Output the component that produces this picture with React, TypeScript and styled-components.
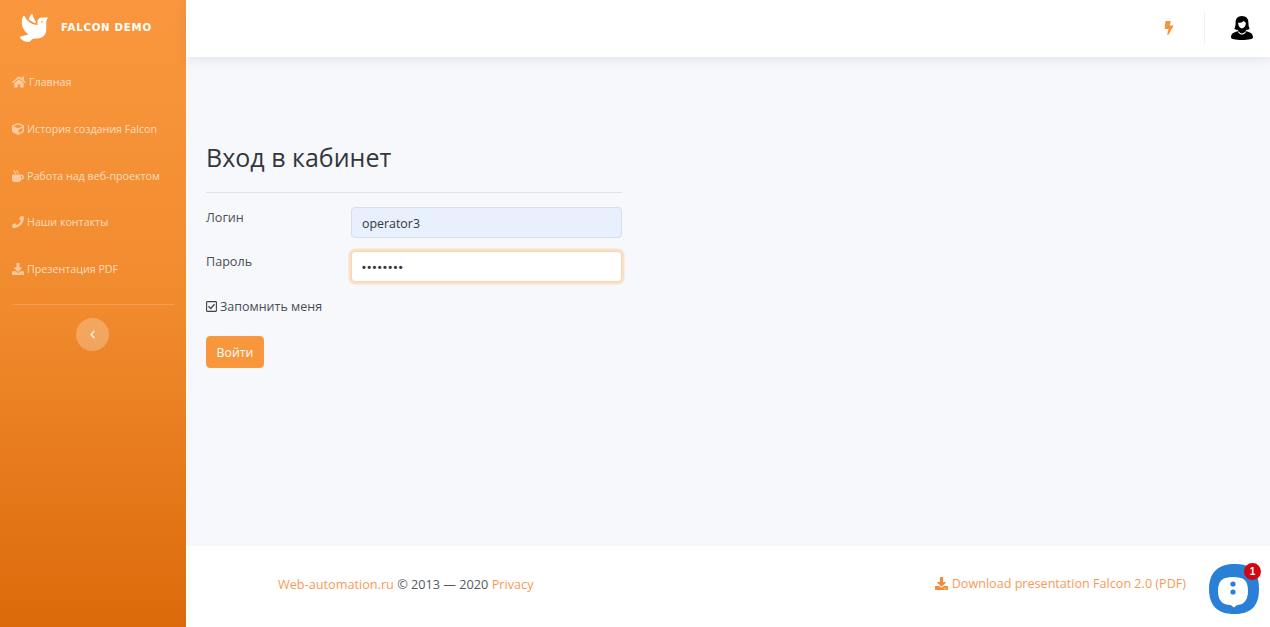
import styled, { createGlobalStyle } from 'styled-components';
import { FaBolt, FaChevronLeft, FaCube, FaDove, FaDownload, FaHome, FaMugHot, FaPhone } from 'react-icons/fa';
import type { ReactNode } from 'react';

const GlobalStyle = createGlobalStyle`
  html, body, #root {
    margin: 0;
    height: 100%;
  }
  body {
    font-family: "Open Sans", "Noto Sans", sans-serif;
    color: #3e4349;
    overflow: hidden;
  }
`;

const Page = styled.div`
  display: flex;
  height: 627px;
  width: 1270px;
`;

const Sidebar = styled.aside`
  width: 186px;
  flex-shrink: 0;
  display: flex;
  flex-direction: column;
  background: linear-gradient(180deg, #fa973e 0%, #f08a2d 50%, #dc6a0a 100%);
  padding: 0 12px;
  box-sizing: border-box;
`;

const Brand = styled.div`
  height: 55px;
  display: flex;
  align-items: center;
  gap: 13px;
  padding-left: 8px;
  color: #fff;
  font-family: "DejaVu Sans", sans-serif;
  font-weight: 700;
  font-size: 10.2px;
  letter-spacing: 0.75px;
  svg {
    font-size: 28px;
  }
`;

const NavList = styled.nav`
  display: flex;
  flex-direction: column;
  padding-top: 4px;
`;

const NavItem = styled.a`
  height: 46.7px;
  display: flex;
  align-items: center;
  gap: 3px;
  color: rgba(255, 255, 255, 0.7);
  font-size: 10.7px;
  white-space: nowrap;
  svg {
    flex-shrink: 0;
    opacity: 0.75;
  }
`;

const NavDivider = styled.hr`
  border: 0;
  border-top: 1px solid rgba(255, 255, 255, 0.16);
  margin: 12px 0 13px;
`;

const Collapse = styled.button`
  width: 33px;
  height: 33px;
  border: 0;
  padding: 0;
  margin-left: -1px;
  border-radius: 50%;
  align-self: center;
  display: flex;
  align-items: center;
  justify-content: center;
  background: rgba(255, 255, 255, 0.25);
  color: rgba(255, 255, 255, 0.85);
  font-size: 9px;
`;

const Main = styled.div`
  flex: 1;
  min-width: 0;
  display: flex;
  flex-direction: column;
  background: #f6f8fc;
`;

const TopBar = styled.header`
  height: 57px;
  box-sizing: border-box;
  flex-shrink: 0;
  display: flex;
  align-items: center;
  justify-content: flex-end;
  background: #fff;
  box-shadow: 0 2px 12px rgba(90, 100, 120, 0.14);
  padding: 0 17px 1px 0;
`;

const Bolt = styled.span`
  color: #f7923a;
  font-size: 14px;
  display: flex;
  margin-right: 28px;
`;

const TopDivider = styled.span`
  width: 1px;
  height: 32px;
  background: #eef0f4;
  margin-right: 26px;
`;

const Avatar = styled.svg`
  width: 22px;
  height: 24px;
  display: block;
`;

const Content = styled.main`
  flex: 1;
  padding: 84px 0 0 20px;
`;

const LoginForm = styled.form`
  width: 416px;
`;

const Title = styled.h1`
  margin: 0;
  font-size: 25px;
  line-height: 32px;
  font-weight: 400;
  color: #33373c;
`;

const Rule = styled.hr`
  border: 0;
  border-top: 1px solid #dfe2e7;
  margin: 19px 0 14px;
`;

const Row = styled.div`
  display: flex;
  margin-bottom: 13px;
`;

const FieldLabel = styled.label`
  width: 145px;
  padding-top: 1px;
  font-size: 12.6px;
  line-height: 20px;
  color: #4a4e54;
`;

const Input = styled.div<{ $focused?: boolean }>`
  flex: 1;
  height: 31px;
  box-sizing: border-box;
  display: flex;
  align-items: center;
  padding: 1px 0 0 10px;
  border-radius: 4px;
  font-size: 12.4px;
  color: #33373c;
  background: ${p => (p.$focused ? '#fff' : '#e8f0fe')};
  border: 1px solid ${p => (p.$focused ? '#fbd3ae' : '#d6deea')};
  box-shadow: ${p => (p.$focused ? '0 0 0 2.5px #fbe0c9' : 'none')};
`;

const Dots = styled.span`
  font-size: 11px;
  letter-spacing: 1.4px;
  font-family: "Liberation Sans", sans-serif;
  font-weight: 700;
`;

const Remember = styled.div`
  display: flex;
  align-items: center;
  gap: 3px;
  margin-top: 15px;
  font-size: 12.5px;
  line-height: 20px;
  color: #4a4e54;
`;

const CheckIcon = styled.svg`
  width: 11px;
  height: 11px;
  margin-top: -1px;
`;

const SubmitButton = styled.button`
  display: block;
  margin-top: 19px;
  width: 58px;
  height: 32px;
  padding: 0;
  border: 1px solid #f79a48;
  border-radius: 4px;
  background: #f8963c;
  color: #fff;
  font-family: inherit;
  font-size: 12.3px;
`;

const Footer = styled.footer`
  height: 81px;
  box-sizing: border-box;
  flex-shrink: 0;
  display: flex;
  align-items: center;
  justify-content: space-between;
  background: #fff;
  padding: 0 84px 6px 92px;
  font-size: 12.7px;
  position: relative;
`;

const Copy = styled.span`
  color: #565a60;
`;

const FootLink = styled.a`
  color: #f79a57;
`;

const DownloadLink = styled(FootLink)`
  font-size: 12.6px;
  svg {
    color: #f58a3a;
    font-size: 13px;
    vertical-align: -2px;
    margin-right: 4px;
  }
`;

const ChatBubble = styled.div`
  position: absolute;
  right: 11px;
  bottom: 13px;
  width: 50px;
  height: 50px;
`;

const ChatBadge = styled.span`
  position: absolute;
  top: -1px;
  right: -2px;
  width: 17px;
  height: 17px;
  border-radius: 50%;
  background: #d40511;
  color: #fff;
  font-family: "Liberation Sans", sans-serif;
  font-size: 10px;
  font-weight: 700;
  display: flex;
  align-items: center;
  justify-content: center;
`;

const navItems: { label: string; icon: ReactNode }[] = [
  { label: 'Главная', icon: <FaHome size={14} /> },
  { label: 'История создания Falcon', icon: <FaCube size={12} /> },
  { label: 'Работа над веб-проектом', icon: <FaMugHot size={12} /> },
  { label: 'Наши контакты', icon: <FaPhone size={12} /> },
  { label: 'Презентация PDF', icon: <FaDownload size={12} /> },
];

export default function App() {
  return (
    <>
      <GlobalStyle />
      <Page>
        <Sidebar>
          <Brand>
            <FaDove />
            FALCON DEMO
          </Brand>
          <NavList>
            {navItems.map(item => (
              <NavItem key={item.label}>
                {item.icon}
                {item.label}
              </NavItem>
            ))}
          </NavList>
          <NavDivider />
          <Collapse type="button">
            <FaChevronLeft />
          </Collapse>
        </Sidebar>
        <Main>
          <TopBar>
            <Bolt>
              <FaBolt />
            </Bolt>
            <TopDivider />
            <Avatar viewBox="0 0 24 26">
              <path
                fill="#000"
                d="M12 0C7.500 0 5 3 5 7c0 3-.4 5.200-1.400 7 1.300.8 2.800 1.100 4.200 1.200l-.2 1.300C3.800 17.400 0 18.800 0 23c0 2 5 3 12 3s12-1 12-3c0-4.200-3.800-5.600-7.600-6.500l-.2-1.300c1.400-.1 2.900-.4 4.200-1.200-1-1.800-1.400-4-1.400-7 0-4-2.500-7-7-7z"
              />
              <path fill="#fff" d="M7.800 7.400c2.400 0 4.800-.8 6.200-2.400.6 1.100 1.300 2 2.200 2.400 0 3.200-1.700 6-4.200 6s-4.200-2.800-4.200-6z" />
              <path fill="#fff" d="M8.500 16.800c1 1.300 2.200 2.100 3.500 2.100s2.500-.8 3.500-2.100l1 .3c-1 1.800-2.700 3.100-4.500 3.100s-3.500-1.300-4.500-3.100z" />
            </Avatar>
          </TopBar>
          <Content>
            <LoginForm>
              <Title>Вход в кабинет</Title>
              <Rule />
              <Row>
                <FieldLabel>Логин</FieldLabel>
                <Input>operator3</Input>
              </Row>
              <Row>
                <FieldLabel>Пароль</FieldLabel>
                <Input $focused>
                  <Dots>••••••••</Dots>
                </Input>
              </Row>
              <Remember>
                <CheckIcon viewBox="0 0 11 11">
                  <rect x="0.6" y="0.6" width="9.800" height="9.800" rx="0.6" fill="none" stroke="#3e4349" strokeWidth="1.100" />
                  <path d="M2.500 5.300l2.200 2.200 3.800-4.200" fill="none" stroke="#3e4349" strokeWidth="1.300" />
                </CheckIcon>
                Запомнить меня
              </Remember>
              <SubmitButton type="button">Войти</SubmitButton>
            </LoginForm>
          </Content>
          <Footer>
            <Copy>
              <FootLink>Web-automation.ru</FootLink> © 2013 — 2020 <FootLink>Privacy</FootLink>
            </Copy>
            <DownloadLink>
              <FaDownload />
              Download presentation Falcon 2.0 (PDF)
            </DownloadLink>
            <ChatBubble>
              <svg viewBox="0 0 50 50" width="50" height="50">
                <path
                  fill="#2a7fd6"
                  d="M25 0C40 0 50 5 50 25c0 18-9 25-25 25C9 50 0 42 0 25 0 6 12 0 25 0z"
                />
                <path
                  fill="#fff"
                  d="M24 13c11 0 15 3 15 14 0 10-5 14-11 14l-3 2.500-3.500-2.500C14 41 9 37 9 27c0-11 5-14 15-14z"
                />
                <circle cx="24" cy="20" r="2.600" fill="#2a7fd6" />
                <circle cx="24" cy="28" r="2.600" fill="#2a7fd6" />
              </svg>
              <ChatBadge>1</ChatBadge>
            </ChatBubble>
          </Footer>
        </Main>
      </Page>
    </>
  );
}
